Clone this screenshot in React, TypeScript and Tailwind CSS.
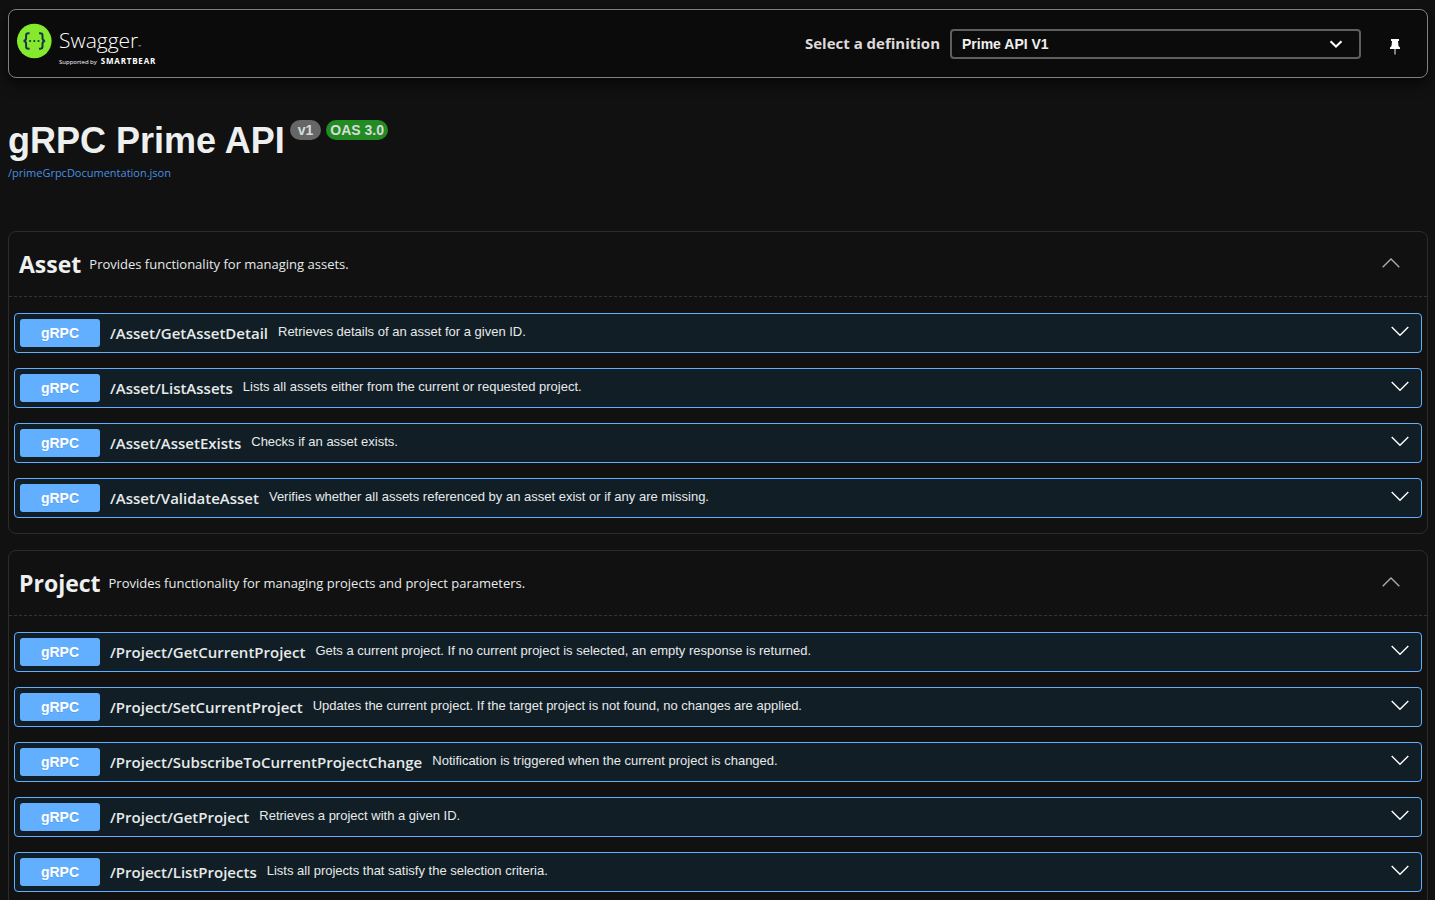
import { useState } from 'react';
import { clsx } from 'clsx';

interface Operation {
  path: string;
  summary: string;
}

interface Tag {
  name: string;
  description: string;
  operations: Operation[];
}

const TAGS: Tag[] = [
  {
    name: 'Asset',
    description: 'Provides functionality for managing assets.',
    operations: [
      { path: '/Asset/GetAssetDetail', summary: 'Retrieves details of an asset for a given ID.' },
      { path: '/Asset/ListAssets', summary: 'Lists all assets either from the current or requested project.' },
      { path: '/Asset/AssetExists', summary: 'Checks if an asset exists.' },
      { path: '/Asset/ValidateAsset', summary: 'Verifies whether all assets referenced by an asset exist or if any are missing.' },
    ],
  },
  {
    name: 'Project',
    description: 'Provides functionality for managing projects and project parameters.',
    operations: [
      { path: '/Project/GetCurrentProject', summary: 'Gets a current project. If no current project is selected, an empty response is returned.' },
      { path: '/Project/SetCurrentProject', summary: 'Updates the current project. If the target project is not found, no changes are applied.' },
      { path: '/Project/SubscribeToCurrentProjectChange', summary: 'Notification is triggered when the current project is changed.' },
      { path: '/Project/GetProject', summary: 'Retrieves a project with a given ID.' },
      { path: '/Project/ListProjects', summary: 'Lists all projects that satisfy the selection criteria.' },
    ],
  },
];

function Chevron({ up, className }: { up?: boolean; className?: string }) {
  return (
    <svg viewBox="0 0 20 20" fill="none" stroke="currentColor" className={clsx('h-5 w-5 shrink-0', className)}>
      <path d={up ? 'M1.7 14.2 10 6l8.3 8.2' : 'M1.7 6 10 14.2 18.3 6'} strokeWidth="1.4" />
    </svg>
  );
}

function Logo() {
  return (
    <a href="#" className="flex items-start gap-1.5 text-white">
      <svg viewBox="0 0 36 36" className="h-9 w-9">
        <circle cx="17.3" cy="18" r="17.3" fill="#85ea2d" />
        <g fill="none" stroke="#173647" strokeWidth="2">
          <path d="M12.6 10.2h-1.2c-1.6 0-2.3.8-2.3 2.3v2.6c0 1.7-.8 2.7-2.5 2.9 1.7.2 2.5 1.2 2.5 2.9v2.6c0 1.5.7 2.3 2.3 2.3h1.2" />
          <path d="M22 10.2h1.2c1.6 0 2.3.8 2.3 2.3v2.6c0 1.7.8 2.7 2.5 2.9-1.7.2-2.5 1.2-2.5 2.9v2.6c0 1.5-.7 2.3-2.3 2.3H22" />
        </g>
        <g fill="#173647">
          <circle cx="13.1" cy="18" r="1.1" />
          <circle cx="17.3" cy="18" r="1.1" />
          <circle cx="21.5" cy="18" r="1.1" />
        </g>
      </svg>
      <span className="flex flex-col pt-1.5">
        <span className="text-[21px] leading-[22px] font-light">
          Swagger<span className="text-[4px]">™</span>
        </span>
        <span className="flex items-baseline gap-1 leading-[6px]">
          <span className="text-[6px]">Supported by</span>
          <span className="text-[8px] font-bold tracking-widest">SMARTBEAR</span>
        </span>
      </span>
    </a>
  );
}

function Pin() {
  return (
    <svg viewBox="0 0 12 18" className="h-[18px] w-3">
      <path d="M2 2h8v2H9l.5 5 1.500 1.500V12H1v-1.500L2.500 9 3 4H2z" fill="#fff" />
      <path d="M6 12v5.500" stroke="#aaa" strokeWidth="1.5" />
    </svg>
  );
}

function Topbar() {
  return (
    <header className="flex h-[69px] items-center justify-between rounded-lg border border-[#808080] bg-[#0b0b0b] pl-2 pr-[26px] shadow-[0_5px_14px_#000000b0]">
      <Logo />
      <div className="flex items-center">
        <label htmlFor="definition" className="mr-2.5 text-[15px] font-bold text-[#dedada]">
          Select a definition
        </label>
        <div className="relative w-[411px]">
          <select
            id="definition"
            className="h-[30px] w-full appearance-none rounded border-2 border-[#5f5f5f] bg-transparent px-2.5 font-['Liberation_Sans',sans-serif] text-sm font-bold text-[#eef0f0]"
          >
            <option>Prime API V1</option>
          </select>
          <svg viewBox="0 0 14 8" className="pointer-events-none absolute right-[18px] top-[11px] h-2 w-3.5">
            <path d="M1.5 1.2 7 6.5l5.5-5.3" fill="none" stroke="#fff" strokeWidth="2" />
          </svg>
        </div>
        <button aria-label="Pin top bar" className="ml-7 mt-1">
          <Pin />
        </button>
      </div>
    </header>
  );
}

function OperationRow({ path, summary }: Operation) {
  return (
    <button className="flex h-10 w-full items-center rounded border border-[#61affe] bg-[#121e26] px-[5px] text-left">
      <span className="flex h-7 w-20 shrink-0 items-center justify-center rounded-[3px] bg-[#61affe] font-['Liberation_Sans',sans-serif] text-sm font-bold text-white [text-shadow:0_1px_0_#0000001a]">
        gRPC
      </span>
      <span className="ml-2.5 text-[15px] font-semibold text-[#e6eaea]">{path}</span>
      <span className="ml-2.5 grow pb-0.5 font-['Liberation_Sans',sans-serif] text-[13px] text-[#e6eaea]">{summary}</span>
      <Chevron className="mb-1 mr-1.5 text-white" />
    </button>
  );
}

function TagSection({ name, description, operations }: Tag) {
  const [open, setOpen] = useState(true);

  return (
    <section className="rounded-lg border border-[#2c2c2c]">
      <div className="flex h-[65px] items-center border-b border-dashed border-[#333333] pl-2.5 pr-[26px]">
        <h2 className="text-[23px] font-bold text-[#eef0f0]">{name}</h2>
        <p className="ml-2 grow pt-0.5 text-[13px] text-[#e6eaea]">{description}</p>
        <button aria-label={`Toggle ${name}`} aria-expanded={open} onClick={() => setOpen(!open)} className="pb-0.5">
          <Chevron up={open} className="text-[#aaaaaa]" />
        </button>
      </div>
      {open && (
        <div className="flex flex-col gap-[15px] px-[5px] pb-[15px] pt-4">
          {operations.map((op) => (
            <OperationRow key={op.path} {...op} />
          ))}
        </div>
      )}
    </section>
  );
}

export default function App() {
  return (
    <div className="min-h-screen bg-[#111111] pb-4 pl-2 pr-[7px] pt-[9px] font-['Open_Sans','Noto_Sans',sans-serif]">
      <Topbar />

      {/* API info */}
      <div className="pb-12 pt-10">
        <div className="flex items-start">
          <h1 className="pt-px font-['Liberation_Sans',sans-serif] text-4xl font-bold leading-[44px] text-[#eef0f0]">gRPC Prime API</h1>
          <div className="ml-[5px] mt-0.5 flex gap-[5px] font-['Liberation_Sans',sans-serif] text-sm font-bold leading-5 text-[#d8dcdc]">
            <span className="rounded-full bg-[#666666] px-2">v1</span>
            <span className="rounded-full bg-[#228b22] px-1">OAS 3.0</span>
          </div>
        </div>
        <a href="#" className="block text-[11px] leading-5 text-[#4990e2]">
          /primeGrpcDocumentation.json
        </a>
      </div>

      <main className="flex flex-col gap-4">
        {TAGS.map((tag) => (
          <TagSection key={tag.name} {...tag} />
        ))}
      </main>
    </div>
  );
}
